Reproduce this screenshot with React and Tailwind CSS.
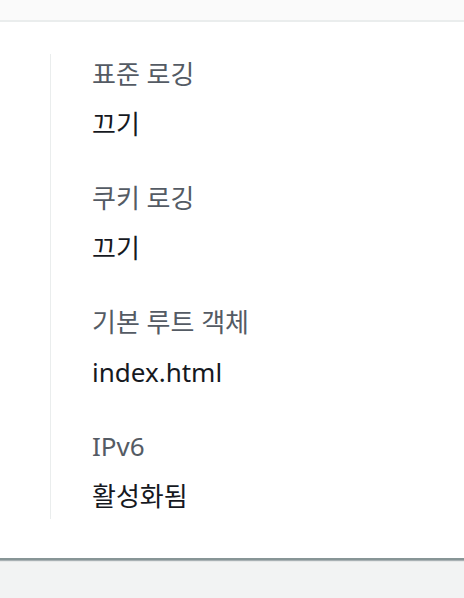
import React from 'react';

const rows = [
  { label: '표준 로깅', value: '끄기' },
  { label: '쿠키 로깅', value: '끄기' },
  { label: '기본 루트 객체', value: 'index.html' },
  { label: 'IPv6', value: '활성화됨' },
];

const App = () => {
  return (
    <div
      className="w-[464px] h-[598px] bg-[#f2f3f3] flex flex-col overflow-hidden"
      style={{ fontFamily: '"Noto Sans", "Noto Sans CJK KR", sans-serif' }}
    >
      <div className="h-[22px] shrink-0 bg-[#fafafa] border-b-2 border-[#eaeded]" />

      {/* Detail panel */}
      <div className="h-[538px] shrink-0 bg-white border-b-2 border-[#879596] shadow-[0_1px_1px_rgba(0,28,36,0.3)] pt-[32px] pl-[50px]">
        <div className="border-l border-[#eaeded] pl-[41px] pt-[2px] pb-[5px] flex flex-col gap-[38px]">
          {rows.map((row) => (
            <div key={row.label} className="flex flex-col">
              <div className="text-[26px] leading-[36px] text-[#545b64]">{row.label}</div>
              <div className="mt-[14px] text-[26px] leading-[36px] text-[#16191f]">{row.value}</div>
            </div>
          ))}
        </div>
      </div>
    </div>
  );
};

export default App;
